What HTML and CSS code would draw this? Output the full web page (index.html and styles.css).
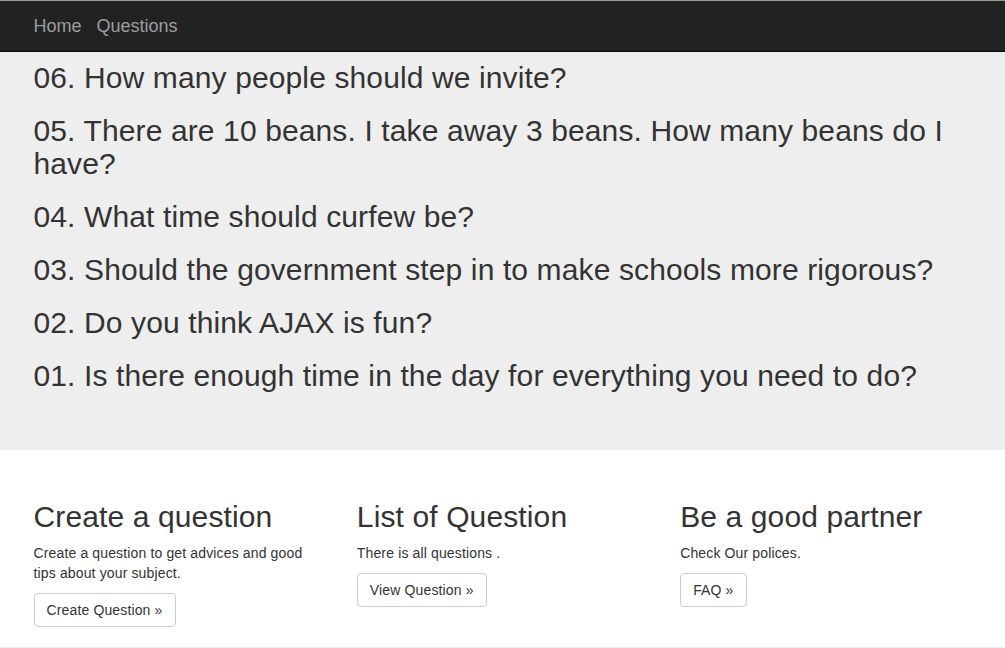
FILE: index.html
```html
<!DOCTYPE html>
<html lang="en">
<head>
<meta charset="utf-8">
<title>Questions</title>
<link rel="stylesheet" href="styles.css">
</head>
<body>
<nav class="navbar">
  <div class="container navbar-inner">
    <a class="brand" href="#">Home</a>
    <a class="brand" href="#">Questions</a>
  </div>
</nav>
<div class="jumbotron">
  <div class="container">
    <h2 class="question">06. How many people should we invite?</h2>
    <h2 class="question">05. There are 10 beans. I take away 3 beans. How many beans do I have?</h2>
    <h2 class="question">04. What time should curfew be?</h2>
    <h2 class="question">03. Should the government step in to make schools more rigorous?</h2>
    <h2 class="question">02. Do you think AJAX is fun?</h2>
    <h2 class="question">01. Is there enough time in the day for everything you need to do?</h2>
  </div>
</div>
<div class="container">
  <div class="row">
    <div class="col">
      <h2 class="col-title">Create a question</h2>
      <p class="col-text">Create a question to get advices and good tips about your subject.</p>
      <a class="btn" href="#">Create Question &raquo;</a>
    </div>
    <div class="col">
      <h2 class="col-title">List of Question</h2>
      <p class="col-text">There is all questions .</p>
      <a class="btn" href="#">View Question &raquo;</a>
    </div>
    <div class="col">
      <h2 class="col-title">Be a good partner</h2>
      <p class="col-text">Check Our polices.</p>
      <a class="btn" href="#">FAQ &raquo;</a>
    </div>
  </div>
</div>
<hr class="divider">
</body>
</html>
```

FILE: styles.css
```css
* {
  box-sizing: border-box;
}

html, body {
  margin: 0;
  padding: 0;
}

body {
  font-family: "Liberation Sans", Arial, Helvetica, sans-serif;
  font-size: 14px;
  line-height: 20px;
  letter-spacing: 0.14px;
  color: #333;
  background: #fff;
}

.container {
  width: 970px;
  margin: 0 auto;
  padding: 0 14px 0 16px;
}

.navbar {
  background: #222;
  border-top: 1px solid #9e9891;
  border-bottom: 1px solid #080808;
  height: 52px;
}

.navbar-inner {
  display: flex;
  gap: 15px;
}

.brand {
  display: block;
  font-size: 18px;
  line-height: 20px;
  letter-spacing: 0;
  padding: 15px 0;
  height: 50px;
  color: #9d9d9d;
  text-decoration: none;
}

.jumbotron {
  background: #eee;
  padding: 9px 0 48px;
  margin-bottom: 30px;
}

.question {
  font-size: 30px;
  font-weight: 500;
  line-height: 33px;
  letter-spacing: 0.12px;
  margin: 20px 0 10px;
}

.question:first-child {
  margin-top: 0;
}

.row {
  display: flex;
  margin: 0 -15px;
}

.col {
  width: 33.3333%;
  padding: 0 15px;
}

.col-title {
  font-size: 30px;
  font-weight: 500;
  line-height: 33px;
  letter-spacing: 0.12px;
  margin: 20px 0 10px;
}

.col-text {
  margin: 0 0 10px;
}

.btn {
  display: inline-block;
  padding: 6px 12px;
  font-size: 14px;
  line-height: 20px;
  color: #333;
  background: #fff;
  border: 1px solid #ccc;
  border-radius: 4px;
  text-decoration: none;
}

.divider {
  margin: 20px 0 0;
  border: 0;
  border-top: 1px solid #eee;
}
```
